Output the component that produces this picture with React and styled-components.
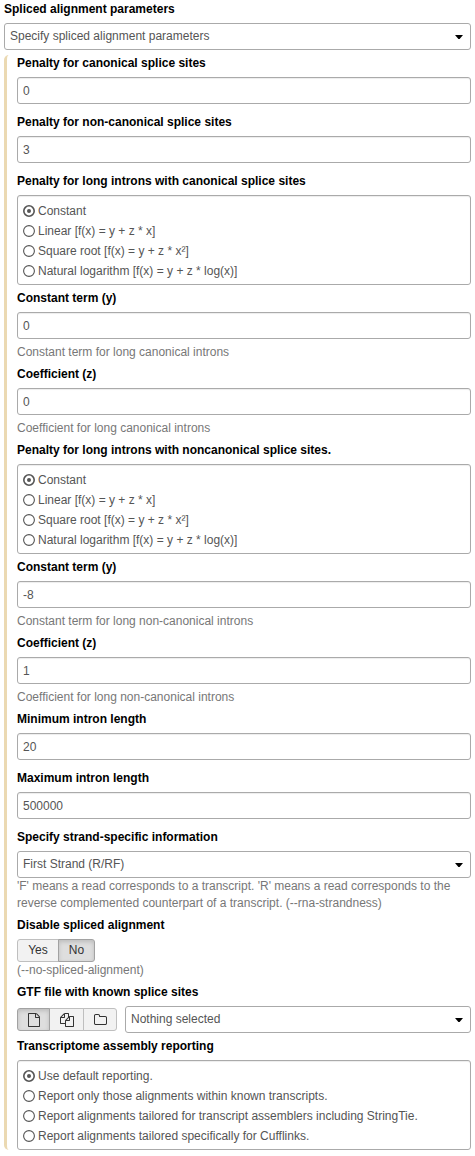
import React, { useState } from "react";
import styled, { createGlobalStyle, css } from "styled-components";

const GlobalStyle = createGlobalStyle`
  *, *::before, *::after { box-sizing: border-box; }
  body {
    margin: 0;
    background: #fff;
    color: #555;
    font: 12px/17px "Liberation Sans", Arial, sans-serif;
  }
`;

const Form = styled.main`
  padding: 1px 4px 6px;
`;

const Label = styled.div`
  height: 17px;
  margin-bottom: 5px;
  font-weight: bold;
  color: #000;
`;

const Section = styled.section`
  display: flex;
  flex-direction: column;
  gap: 5px;
  margin-top: 5px;
  padding-left: 10px;
  border-left: 3px solid #ebd9b2;
  border-radius: 5px 0 0 5px;
`;

const frame = css`
  border: 1px solid #aaa;
  border-radius: 3px;
  background: #fff;
`;

const TextInput = styled.input`
  ${frame}
  display: block;
  width: 100%;
  height: 27px;
  padding: 0 5px;
  font: inherit;
  color: #555;
  outline: none;
  box-shadow: inset 0 1px 1px rgba(0, 0, 0, 0.075);
`;

const SelectBox = styled.div`
  ${frame}
  display: flex;
  align-items: center;
  justify-content: space-between;
  flex: 1;
  height: 27px;
  padding: 0 6px 0 5px;
`;

const Caret = styled.svg`
  display: block;
  width: 10px;
  height: 5px;
  fill: #000;
`;

const Help = styled.div`
  margin-top: ${(p) => (p.$spaced ? "5px" : 0)};
  color: #777;
`;

const RadioBox = styled.div`
  ${frame}
  height: 90px;
  padding: 5px;
  box-shadow: inset 0 1px 1px rgba(0, 0, 0, 0.075);
`;

const RadioRow = styled.div`
  display: flex;
  align-items: center;
  gap: 3px;
  height: 20px;
  cursor: pointer;
`;

const RadioIcon = styled.svg`
  display: block;
  width: 12px;
  height: 12px;
  fill: none;
  stroke: #555;
`;

const ButtonGroup = styled.div`
  display: flex;
`;

const Button = styled.button`
  display: flex;
  align-items: center;
  justify-content: center;
  width: ${(p) => p.$width}px;
  height: 23px;
  padding: 0;
  border: 1px solid ${(p) => (p.$active ? "#a2a2a2" : "#bfbfbf")};
  background: ${(p) => (p.$active ? "#dedede" : "#f2f2f2")};
  box-shadow: ${(p) => (p.$active ? "inset 0 2px 4px rgba(0, 0, 0, 0.15)" : "none")};
  font: inherit;
  color: #333;
  z-index: ${(p) => (p.$active ? 1 : 0)};

  & + & { margin-left: -1px; }
  &:first-child { border-radius: 3px 0 0 3px; }
  &:last-child { border-radius: 0 3px 3px 0; }
`;

const GlyphSvg = styled.svg`
  display: block;
  width: ${(p) => p.$width}px;
  height: 14px;
  fill: #333;
`;

const DataRow = styled.div`
  display: flex;
  align-items: center;
  gap: 8px;
`;

const glyphs = {
  file: {
    box: "128 0 1536 1792",
    width: 12,
    d: "M1596 380q28 28 48 76t20 88v1152q0 40-28 68t-68 28h-1344q-40 0-68-28t-28-68v-1600q0-40 28-68t68-28h896q40 0 88 20t76 48zm-444-244v376h376q-10-29-22-41l-313-313q-12-12-41-22zm384 1528v-1024h-416q-40 0-68-28t-28-68v-416h-768v1536h1280z",
  },
  files: {
    box: "0 0 1792 1792",
    width: 14,
    d: "M1696 384q40 0 68 28t28 68v1216q0 40-28 68t-68 28h-960q-40 0-68-28t-28-68v-288h-544q-40 0-68-28t-28-68v-672q0-40 20-88t48-76l408-408q28-28 76-48t88-20h416q40 0 68 28t28 68v328q68-40 128-40h416zm-544 213l-299 299h299v-299zm-640-384l-299 299h299v-299zm196 647l316-316v-416h-384v416q0 40-28 68t-68 28h-416v640h512v-256q0-40 20-88t48-76zm956 804v-1152h-384v416q0 40-28 68t-68 28h-416v640h896z",
  },
  folder: {
    box: "64 0 1664 1792",
    width: 13,
    d: "M1600 1312v-704q0-40-28-68t-68-28h-704q-40 0-68-28t-28-68v-64q0-40-28-68t-68-28h-320q-40 0-68 28t-28 68v960q0 40 28 68t68 28h1216q40 0 68-28t28-68zm128-704v704q0 92-66 158t-158 66h-1216q-92 0-158-66t-66-158v-960q0-92 66-158t158-66h320q92 0 158 66t66 158v32h672q92 0 158 66t66 158z",
  },
};

function Glyph({ name }) {
  const g = glyphs[name];
  return (
    <GlyphSvg viewBox={g.box} $width={g.width}>
      <path d={g.d} />
    </GlyphSvg>
  );
}

function Select({ children }) {
  return (
    <SelectBox>
      {children}
      <Caret viewBox="0 0 10 5">
        <path d="M1 1H9L5.6 5H4.4Z" />
      </Caret>
    </SelectBox>
  );
}

function Field({ label, help, spaced, children }) {
  return (
    <div>
      <Label>{label}</Label>
      {children}
      {help && <Help $spaced={spaced}>{help}</Help>}
    </div>
  );
}

const InputSpace = styled.div`
  padding-bottom: ${(p) => (p.$open ? "5px" : 0)};
`;

function TextField({ label, value, help }) {
  return (
    <Field label={label} help={help} spaced>
      <InputSpace $open={!help}>
        <TextInput defaultValue={value} />
      </InputSpace>
    </Field>
  );
}

function RadioField({ label, options }) {
  const [selected, setSelected] = useState(0);
  return (
    <Field label={label}>
      <RadioBox>
        {options.map((text, i) => (
          <RadioRow key={text} onClick={() => setSelected(i)}>
            <RadioIcon viewBox="0 0 12 12">
              <circle cx="6" cy="6" r={i === selected ? 5.2 : 5.4} strokeWidth={i === selected ? 1.6 : 1.1} />
              {i === selected && <circle cx="6" cy="6" r="2" fill="#555" stroke="none" />}
            </RadioIcon>
            {text}
          </RadioRow>
        ))}
      </RadioBox>
    </Field>
  );
}

const penaltyFunctions = [
  "Constant",
  "Linear [f(x) = y + z * x]",
  "Square root [f(x) = y + z * x²]",
  "Natural logarithm [f(x) = y + z * log(x)]",
];

const reportingOptions = [
  "Use default reporting.",
  "Report only those alignments within known transcripts.",
  "Report alignments tailored for transcript assemblers including StringTie.",
  "Report alignments tailored specifically for Cufflinks.",
];

export default function App() {
  return (
    <>
      <GlobalStyle />
      <Form>
        <Field label="Spliced alignment parameters">
          <Select>Specify spliced alignment parameters</Select>
        </Field>
        <Section>
          <TextField label="Penalty for canonical splice sites" value="0" />
          <TextField label="Penalty for non-canonical splice sites" value="3" />
          <RadioField label="Penalty for long introns with canonical splice sites" options={penaltyFunctions} />
          <TextField label="Constant term (y)" value="0" help="Constant term for long canonical introns" />
          <TextField label="Coefficient (z)" value="0" help="Coefficient for long canonical introns" />
          <RadioField label="Penalty for long introns with noncanonical splice sites." options={penaltyFunctions} />
          <TextField label="Constant term (y)" value="-8" help="Constant term for long non-canonical introns" />
          <TextField label="Coefficient (z)" value="1" help="Coefficient for long non-canonical introns" />
          <TextField label="Minimum intron length" value="20" />
          <TextField label="Maximum intron length" value="500000" />
          <Field
            label="Specify strand-specific information"
            help="'F' means a read corresponds to a transcript. 'R' means a read corresponds to the reverse complemented counterpart of a transcript. (--rna-strandness)"
          >
            <Select>First Strand (R/RF)</Select>
          </Field>
          <Field label="Disable spliced alignment" help="(--no-spliced-alignment)">
            <ButtonGroup>
              <Button $width={42}>Yes</Button>
              <Button $width={37} $active>No</Button>
            </ButtonGroup>
          </Field>
          <Field label="GTF file with known splice sites">
            <DataRow>
              <ButtonGroup>
                <Button $width={33} $active><Glyph name="file" /></Button>
                <Button $width={35}><Glyph name="files" /></Button>
                <Button $width={34}><Glyph name="folder" /></Button>
              </ButtonGroup>
              <Select>Nothing selected</Select>
            </DataRow>
          </Field>
          <RadioField label="Transcriptome assembly reporting" options={reportingOptions} />
        </Section>
      </Form>
    </>
  );
}
